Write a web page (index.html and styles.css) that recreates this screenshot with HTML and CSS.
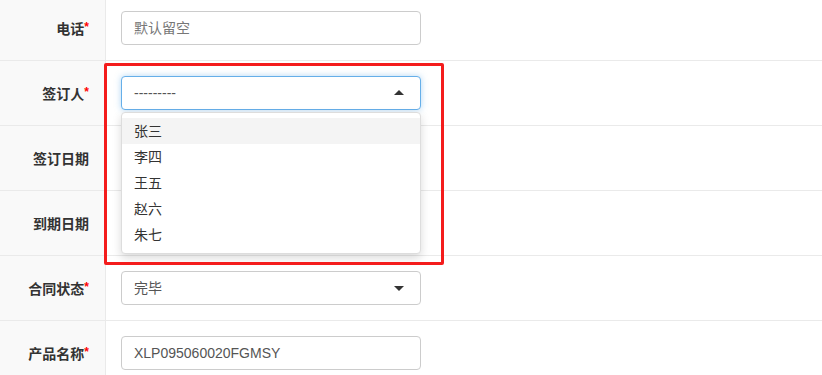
FILE: index.html
```html
<!DOCTYPE html>
<html lang="zh-CN">
<head>
    <meta charset="UTF-8">
    <meta name="viewport" content="width=device-width, initial-scale=1.0">
    <title>合同</title>
    <link rel="stylesheet" href="styles.css">
</head>
<body>
    <div class="form">
        <div class="row">
            <div class="label">电话<span class="req">*</span></div>
            <div class="field"><div class="input placeholder">默认留空</div></div>
        </div>
        <div class="row">
            <div class="label">签订人<span class="req">*</span></div>
            <div class="field">
                <div class="input select open">---------<span class="caret up"></span></div>
                <ul class="menu">
                    <li class="active">张三</li>
                    <li>李四</li>
                    <li>王五</li>
                    <li>赵六</li>
                    <li>朱七</li>
                </ul>
            </div>
        </div>
        <div class="row">
            <div class="label">签订日期</div>
            <div class="field"><div class="input"></div></div>
        </div>
        <div class="row">
            <div class="label">到期日期</div>
            <div class="field"><div class="input"></div></div>
        </div>
        <div class="row">
            <div class="label">合同状态<span class="req">*</span></div>
            <div class="field"><div class="input select">完毕<span class="caret"></span></div></div>
        </div>
        <div class="row">
            <div class="label">产品名称<span class="req">*</span></div>
            <div class="field"><div class="input">XLP095060020FGMSY</div></div>
        </div>
        <!-- annotation box -->
        <div class="mark"></div>
    </div>
</body>
</html>
```

FILE: styles.css
```css
*, *:before, *:after{
    margin: 0;
    padding: 0;
    box-sizing: border-box;
}
body{
    background: #fff;
    font-family: "Liberation Sans", "Noto Sans CJK SC", sans-serif;
    color: #333;
    overflow: hidden;
}
.form{
    position: relative;
    margin-top: -4px;
}
.row{
    display: flex;
    height: 65px;
    border-bottom: 1px solid #eaeaea;
}
.label{
    width: 106px;
    flex: none;
    background: #f9f9f9;
    border-right: 1px solid #eaeaea;
    display: flex;
    align-items: center;
    justify-content: flex-end;
    padding-right: 16px;
    font-size: 14px;
    font-weight: bold;
    color: #333;
}
.req{
    color: #f00;
    align-self: flex-start;
    margin-top: 24px;
    font-size: 12px;
}
.field{
    position: relative;
    padding: 15px 0 0 15px;
}
.input{
    position: relative;
    width: 300px;
    height: 34px;
    border: 1px solid #ccc;
    border-radius: 4px;
    padding: 0 12px;
    font-size: 14px;
    line-height: 32px;
    color: #555;
    background: #fff;
}
.placeholder{
    color: #777;
}
.select.open{
    border-color: #66afe9;
    box-shadow: 0 0 6px rgba(102, 175, 233, .5);
}
.caret{
    position: absolute;
    right: 16px;
    top: 14px;
    border-left: 5px solid transparent;
    border-right: 5px solid transparent;
    border-top: 5px solid #333;
}
.caret.up{
    border-top: none;
    border-bottom: 5px solid #333;
    top: 13px;
}
.menu{
    position: absolute;
    left: 15px;
    top: 51px;
    width: 300px;
    list-style: none;
    background: #fff;
    border: 1px solid #ddd;
    border-radius: 4px;
    box-shadow: 0 4px 10px rgba(0, 0, 0, .15);
    padding: 5px 0;
    z-index: 2;
}
.menu li{
    height: 26px;
    line-height: 26px;
    padding-left: 12px;
    font-size: 14px;
    color: #333;
}
.menu li.active{
    background: #f4f4f4;
}
.mark{
    position: absolute;
    left: 104px;
    top: 67px;
    width: 340px;
    height: 202px;
    border: 3px solid #f41c1c;
    border-radius: 2px;
    z-index: 3;
}
```
